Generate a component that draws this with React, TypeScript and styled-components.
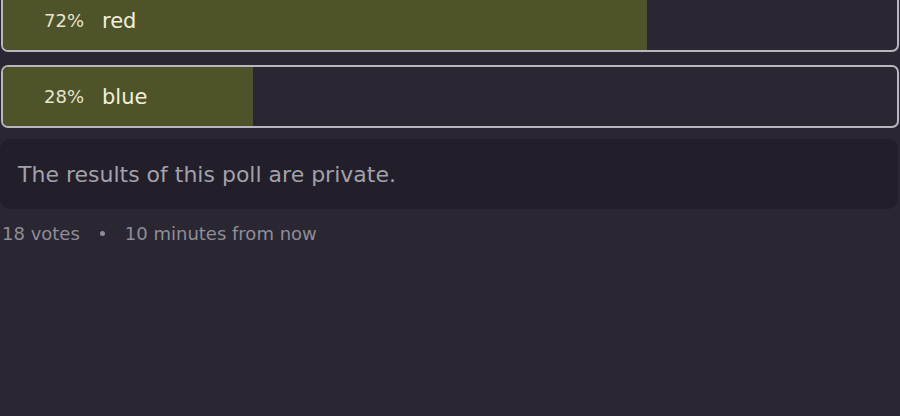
import styled, { createGlobalStyle } from 'styled-components';

const GlobalStyle = createGlobalStyle`
    html, body {
        margin: 0;
        padding: 0;
        background: #2a2733;
        font-family: "DejaVu Sans", "Open Sans", sans-serif;
    }
`;

const Poll = styled.div`
    width: 900px;
    height: 416px;
    overflow: hidden;
    display: flex;
    flex-direction: column;
    margin-top: -11px;
`;

const Options = styled.ul`
    list-style: none;
    margin: 0;
    padding: 0 1px;
    display: flex;
    flex-direction: column;
    gap: 13px;
`;

const Option = styled.li`
    position: relative;
    height: 59px;
    border: 2px solid #b7b5be;
    border-radius: 7px;
    overflow: hidden;
    display: flex;
    align-items: center;
`;

const Fill = styled.div`
    position: absolute;
    top: 0;
    left: 0;
    bottom: 0;
    background: #4e5329;
`;

const Percent = styled.span`
    position: relative;
    width: 81px;
    text-align: right;
    font-size: 18px;
    color: #e6e4cf;
`;

const Label = styled.span`
    position: relative;
    margin-left: 18px;
    font-size: 21px;
    color: #f1efdc;
`;

const PrivateNote = styled.div`
    margin-top: 11px;
    margin-right: 2px;
    height: 70px;
    padding: 0 18px;
    display: flex;
    align-items: center;
    background: #221f2a;
    border-radius: 10px;
    font-size: 22px;
    color: #a3a1ab;
`;

const Meta = styled.div`
    margin-top: 14px;
    padding-left: 2px;
    display: flex;
    align-items: center;
    gap: 20px;
    font-size: 18px;
    color: #8f8d97;
`;

const Dot = styled.span`
    width: 5px;
    height: 5px;
    border-radius: 50%;
    background: #8f8d97;
`;

const options = [
    { label: 'red', percent: 72 },
    { label: 'blue', percent: 28 },
];

export default function App() {
    return (
        <>
            <GlobalStyle />
            <Poll>
                <Options>
                    {options.map(o => (
                        <Option key={o.label}>
                            <Fill style={{ width: `${o.percent}%` }} />
                            <Percent>{o.percent}%</Percent>
                            <Label>{o.label}</Label>
                        </Option>
                    ))}
                </Options>
                <PrivateNote>The results of this poll are private.</PrivateNote>
                <Meta>
                    <span>18 votes</span>
                    <Dot />
                    <span>10 minutes from now</span>
                </Meta>
            </Poll>
        </>
    );
}
